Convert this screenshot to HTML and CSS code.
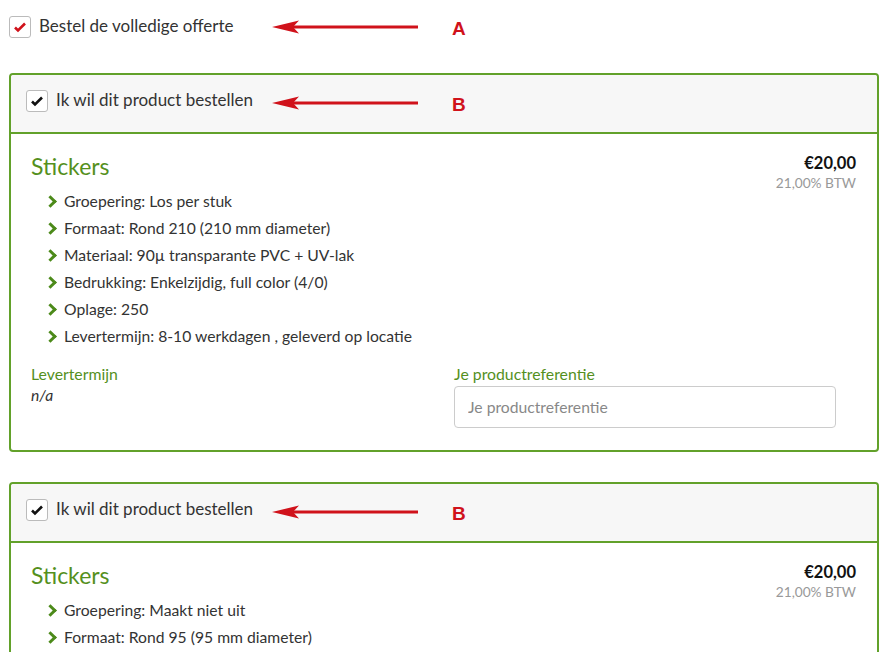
FILE: index.html
```html
<!DOCTYPE html>
<html lang="nl">

<head>
    <meta charset="UTF-8">
    <title>Offerte bestellen</title>
    <link rel="stylesheet" href="styles.css">
</head>

<body>
    <div class="page">
        <div class="order-all">
            <label class="check-row">
                <span class="checkbox checkbox-red">
                    <svg viewBox="0 0 14 14" width="14" height="14"><path d="M2 7.5l3 3 7-7" fill="none" stroke="currentColor" stroke-width="2.6" /></svg>
                </span>
                <span class="check-text">Bestel de volledige offerte</span>
            </label>
            <div class="annotation">
                <svg class="arrow" viewBox="0 0 148 14" width="148" height="14"><path d="M0 7L27 0.5L21 7L27 13.5Z" fill="#d0121b" /><line x1="20" y1="7" x2="146" y2="7" stroke="#d0121b" stroke-width="3" /></svg>
                <span class="annotation-letter">A</span>
            </div>
        </div>

        <div class="product">
            <div class="product-header">
                <label class="check-row">
                    <span class="checkbox">
                        <svg viewBox="0 0 14 14" width="14" height="14"><path d="M2 7.5l3 3 7-7" fill="none" stroke="currentColor" stroke-width="2.6" /></svg>
                    </span>
                    <span class="check-text">Ik wil dit product bestellen</span>
                </label>
                <div class="annotation">
                    <svg class="arrow" viewBox="0 0 148 14" width="148" height="14"><path d="M0 7L27 0.5L21 7L27 13.5Z" fill="#d0121b" /><line x1="20" y1="7" x2="146" y2="7" stroke="#d0121b" stroke-width="3" /></svg>
                    <span class="annotation-letter">B</span>
                </div>
            </div>
            <div class="product-body">
                <div class="product-top">
                    <div>
                        <h2>Stickers</h2>
                        <ul class="specs">
                            <li>Groepering: Los per stuk</li>
                            <li>Formaat: Rond 210 (210 mm diameter)</li>
                            <li>Materiaal: 90µ transparante PVC + UV-lak</li>
                            <li>Bedrukking: Enkelzijdig, full color (4/0)</li>
                            <li>Oplage: 250</li>
                            <li>Levertermijn: 8-10 werkdagen , geleverd op locatie</li>
                        </ul>
                    </div>
                    <div class="price">
                        <div class="amount">€20,00</div>
                        <div class="vat">21,00% BTW</div>
                    </div>
                </div>
                <div class="details">
                    <div>
                        <div class="field-label">Levertermijn</div>
                        <div class="field-value">n/a</div>
                    </div>
                    <div>
                        <div class="field-label">Je productreferentie</div>
                        <input type="text" placeholder="Je productreferentie">
                    </div>
                </div>
            </div>
        </div>

        <div class="product">
            <div class="product-header">
                <label class="check-row">
                    <span class="checkbox">
                        <svg viewBox="0 0 14 14" width="14" height="14"><path d="M2 7.5l3 3 7-7" fill="none" stroke="currentColor" stroke-width="2.6" /></svg>
                    </span>
                    <span class="check-text">Ik wil dit product bestellen</span>
                </label>
                <div class="annotation">
                    <svg class="arrow" viewBox="0 0 148 14" width="148" height="14"><path d="M0 7L27 0.5L21 7L27 13.5Z" fill="#d0121b" /><line x1="20" y1="7" x2="146" y2="7" stroke="#d0121b" stroke-width="3" /></svg>
                    <span class="annotation-letter">B</span>
                </div>
            </div>
            <div class="product-body">
                <div class="product-top">
                    <div>
                        <h2>Stickers</h2>
                        <ul class="specs">
                            <li>Groepering: Maakt niet uit</li>
                            <li>Formaat: Rond 95 (95 mm diameter)</li>
                        </ul>
                    </div>
                    <div class="price">
                        <div class="amount">€20,00</div>
                        <div class="vat">21,00% BTW</div>
                    </div>
                </div>
            </div>
        </div>
    </div>
</body>

</html>
```

FILE: styles.css
```css
body {
    font-family: Lato, "Open Sans", Arial, sans-serif;
    margin: 0;
    background-color: #fff;
    color: #333;
    overflow: hidden;
}

.page {
    width: 870px;
    padding: 16px 0 0 9px;
}

.order-all {
    position: relative;
    height: 22px;
    margin-bottom: 35px;
}

.check-row {
    display: flex;
    align-items: center;
    gap: 8px;
    cursor: pointer;
}

.checkbox {
    flex: none;
    width: 20px;
    height: 20px;
    border: 1px solid #bbb;
    border-radius: 3px;
    background-color: #fff;
    display: flex;
    align-items: center;
    justify-content: center;
    color: #111;
}

.checkbox-red {
    color: #d0121b;
}

.check-text {
    font-size: 17px;
    line-height: 20px;
    margin-top: -2px;
    color: #333;
}

/* rode pijlen uit de schermafbeelding */
.annotation {
    position: absolute;
    display: flex;
    align-items: center;
    transform: translateY(-50%);
}

.order-all .annotation {
    left: 263px;
    top: 11px;
}

.annotation .arrow {
    display: block;
}

.annotation-letter {
    margin-left: 32px;
    margin-top: 4px;
    font-family: "Liberation Sans", Arial, sans-serif;
    font-weight: bold;
    font-size: 19px;
    color: #d0121b;
}

.product {
    border: 2px solid #62a12a;
    border-radius: 4px;
    margin-bottom: 30px;
}

.product-header {
    position: relative;
    height: 59px;
    padding: 15px 15px 0 15px;
    box-sizing: border-box;
    background-color: #f7f7f7;
    border-bottom: 2px solid #62a12a;
    border-radius: 3px 3px 0 0;
}

.product-header .annotation {
    left: 261px;
    top: 28px;
}

.product-body {
    padding: 18px 20px 22px 20px;
}

.product-top {
    display: flex;
    justify-content: space-between;
}

h2 {
    margin: 0 0 8px 0;
    font-size: 23px;
    font-weight: normal;
    color: #55901d;
}

.specs {
    list-style: none;
    margin: 0;
    padding: 0 0 0 16px;
    font-size: 15.7px;
    line-height: 27px;
}

.specs li {
    display: flex;
    align-items: center;
}

.specs li::before {
    content: "";
    flex: none;
    width: 6px;
    height: 6px;
    border-right: 3px solid #4c8a1a;
    border-top: 3px solid #4c8a1a;
    transform: rotate(45deg);
    margin: 0 9px 0 -1px;
}

.price {
    text-align: right;
    padding: 1px 1px 0 0;
}

.amount {
    font-size: 16.5px;
    font-weight: bold;
    color: #111;
    line-height: 20px;
}

.vat {
    font-size: 13.7px;
    color: #999;
    line-height: 20px;
}

.details {
    display: grid;
    grid-template-columns: 423px 382px;
    margin-top: 12px;
}

.field-label {
    font-size: 15.8px;
    color: #55901d;
    line-height: 24px;
}

.field-value {
    font-size: 15.7px;
    font-style: italic;
    color: #333;
    line-height: 18px;
}

input[type="text"] {
    display: block;
    width: 100%;
    height: 42px;
    padding: 0 13px;
    border: 1px solid #ccc;
    border-radius: 4px;
    box-sizing: border-box;
    font-family: Lato, "Open Sans", Arial, sans-serif;
    font-size: 15.7px;
}

input::placeholder {
    color: #888;
}
```
